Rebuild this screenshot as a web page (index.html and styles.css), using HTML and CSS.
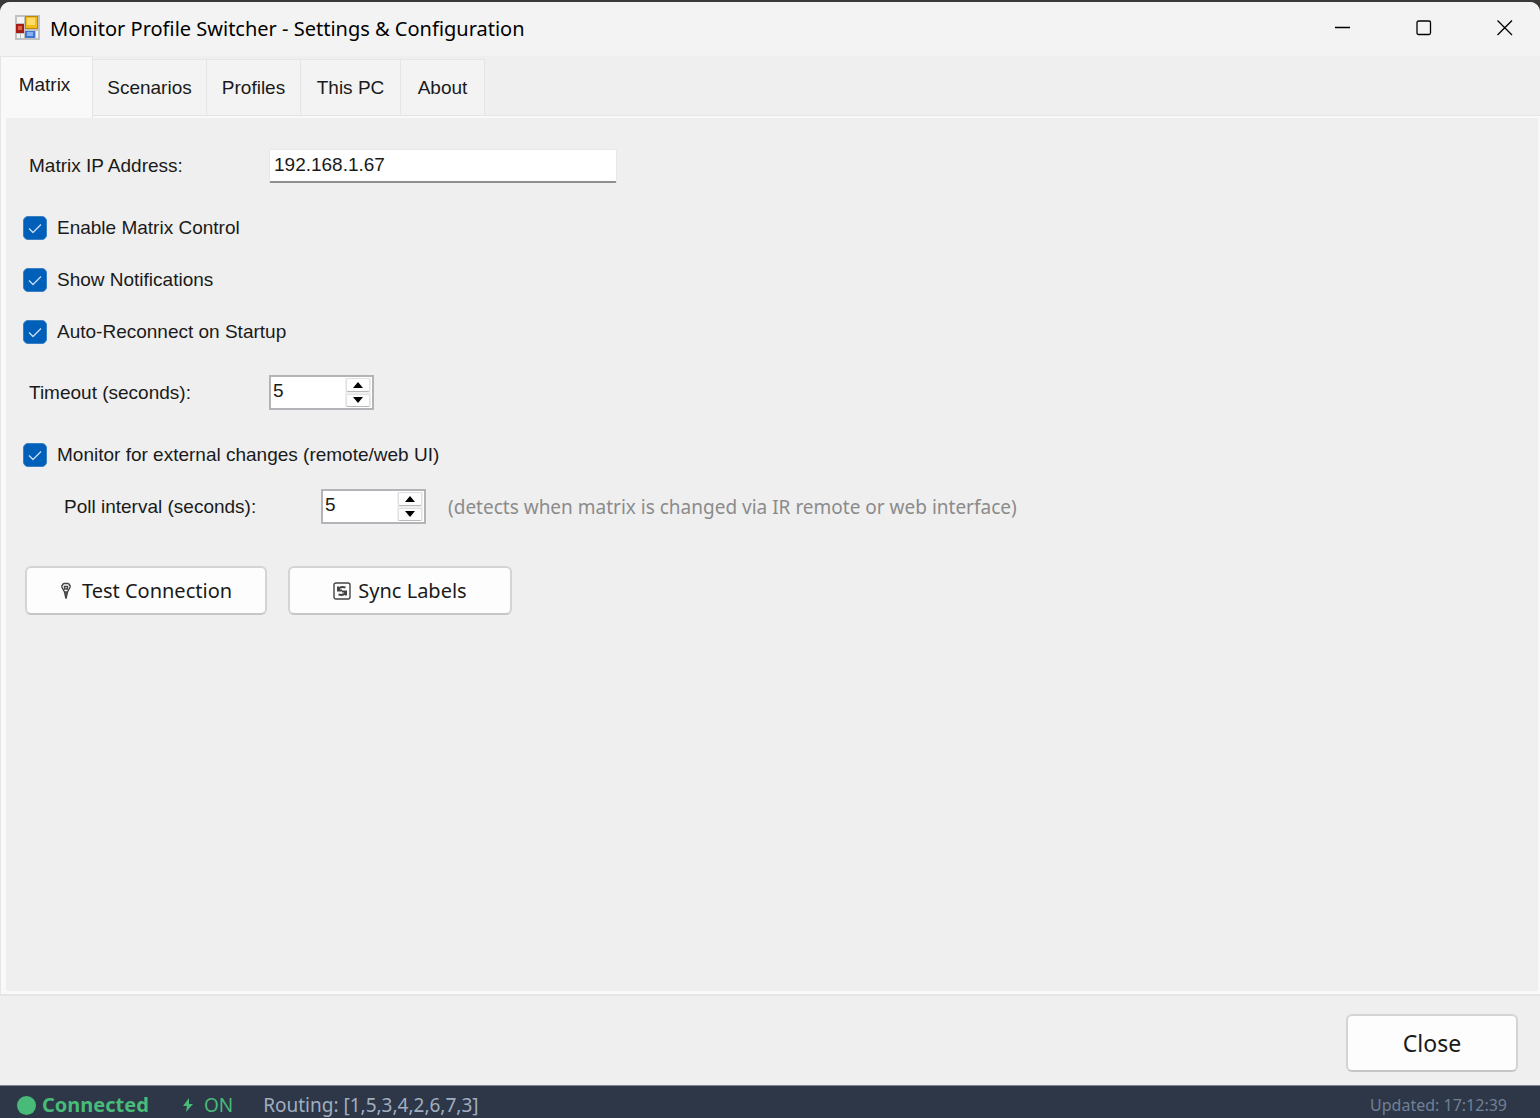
FILE: index.html
```html
<!DOCTYPE html>
<html lang="en">
<head>
    <meta charset="UTF-8">
    <title>Monitor Profile Switcher - Settings &amp; Configuration</title>
    <link rel="stylesheet" href="styles.css">
</head>
<body>
    <div class="window">
        <header class="titlebar">
            <svg class="app-icon" viewBox="0 0 25 25">
                <rect width="25" height="25" fill="#bfc1c3"/>
                <rect x="2" y="2" width="7" height="6" fill="#f4f4f4"/>
                <rect x="2" y="19" width="3" height="4" fill="#f4f4f4"/>
                <rect x="6" y="19" width="3" height="4" fill="#f4f4f4"/>
                <rect x="21" y="16" width="2" height="7" fill="#f4f4f4"/>
                <rect x="1" y="9" width="8" height="9" fill="#a51c14"/>
                <rect x="3" y="11" width="4" height="4" fill="#e2614d"/>
                <rect x="10" y="1" width="13" height="13" fill="#b98a0c"/>
                <rect x="11" y="2" width="11" height="11" fill="#f5bd1c"/>
                <rect x="12" y="3" width="8" height="7" fill="#fbdc6c"/>
                <rect x="10" y="16" width="10" height="7" fill="#3f74cf"/>
                <rect x="12" y="17" width="6" height="4" fill="#85b2f5"/>
            </svg>
            <h1>Monitor Profile Switcher - Settings &amp; Configuration</h1>
            <div class="window-controls">
                <button type="button" aria-label="Minimize">
                    <svg viewBox="0 0 16 16"><path d="M0 7.500h15"/></svg>
                </button>
                <button type="button" aria-label="Maximize">
                    <svg viewBox="0 0 16 16"><rect x="1" y="1" width="13.500" height="13.500" rx="1.500"/></svg>
                </button>
                <button type="button" aria-label="Close window">
                    <svg viewBox="0 0 16 16"><path d="M0.500 0.500l14.500 14.500M15 0.500l-14.500 14.500"/></svg>
                </button>
            </div>
        </header>

        <nav class="tabs" role="tablist">
            <button type="button" role="tab" class="tab active" aria-selected="true">Matrix</button>
            <button type="button" role="tab" class="tab">Scenarios</button>
            <button type="button" role="tab" class="tab">Profiles</button>
            <button type="button" role="tab" class="tab">This PC</button>
            <button type="button" role="tab" class="tab">About</button>
        </nav>

        <main class="panel">
            <form class="settings">
                <div class="field">
                    <label for="matrixIp">Matrix IP Address:</label>
                    <input type="text" class="text-input" id="matrixIp" value="192.168.1.67">
                </div>
                <label class="check">
                    <input type="checkbox" checked>
                    <svg viewBox="0 0 24 24"><path d="M6 12.500l4 4 8-8"/></svg>
                    Enable Matrix Control
                </label>
                <label class="check">
                    <input type="checkbox" checked>
                    <svg viewBox="0 0 24 24"><path d="M6 12.500l4 4 8-8"/></svg>
                    Show Notifications
                </label>
                <label class="check">
                    <input type="checkbox" checked>
                    <svg viewBox="0 0 24 24"><path d="M6 12.500l4 4 8-8"/></svg>
                    Auto-Reconnect on Startup
                </label>
                <div class="field">
                    <label for="timeout">Timeout (seconds):</label>
                    <div class="spinner">
                        <input type="number" id="timeout" value="5">
                        <div class="spin-buttons">
                            <button type="button" aria-label="Increase"><svg viewBox="0 0 12 7"><path d="M6 0l6 7H0z"/></svg></button>
                            <button type="button" aria-label="Decrease"><svg viewBox="0 0 12 7"><path d="M0 0h12L6 7z"/></svg></button>
                        </div>
                    </div>
                </div>
                <label class="check">
                    <input type="checkbox" checked>
                    <svg viewBox="0 0 24 24"><path d="M6 12.500l4 4 8-8"/></svg>
                    Monitor for external changes (remote/web UI)
                </label>
                <div class="field nested">
                    <label for="pollInterval">Poll interval (seconds):</label>
                    <div class="spinner">
                        <input type="number" id="pollInterval" value="5">
                        <div class="spin-buttons">
                            <button type="button" aria-label="Increase"><svg viewBox="0 0 12 7"><path d="M6 0l6 7H0z"/></svg></button>
                            <button type="button" aria-label="Decrease"><svg viewBox="0 0 12 7"><path d="M0 0h12L6 7z"/></svg></button>
                        </div>
                    </div>
                    <span class="hint">(detects when matrix is changed via IR remote or web interface)</span>
                </div>
                <div class="actions">
                    <button type="button" class="btn btn-test">
                        <svg class="icon-plug" viewBox="0 0 12 18">
                            <path d="M3.500 1.500h5M1.500 4.500l2-3M10.500 4.500l-2-3M1.500 4.500l3 5.500L6 16.500 7.500 10l3-5.500"/>
                            <path d="M4.500 4.500h3v2.500h-3zM4.500 10h3M6 10v6"/>
                        </svg>
                        Test Connection
                    </button>
                    <button type="button" class="btn btn-sync">
                        <svg class="icon-sync" viewBox="0 0 18 18">
                            <rect x="1" y="1" width="16" height="16" rx="2"/>
                            <path class="arrows" d="M5 4.500v4h4M5 8q2-4 7.500-2.500M13 13.500v-4H9M13 10q-2 4-7.500 2.500"/>
                        </svg>
                        Sync Labels
                    </button>
                </div>
            </form>
        </main>

        <div class="footer">
            <button type="button" class="btn btn-close">Close</button>
        </div>

        <footer class="statusbar">
            <span class="connected"><span class="dot"></span>Connected</span>
            <span class="power">
                <svg viewBox="0 0 10 14"><path d="M6 0L0 8h4l-1 6 7-8H6z"/></svg>
                ON
            </span>
            <span class="routing">Routing: [1,5,3,4,2,6,7,3]</span>
            <span class="updated">Updated: 17:12:39</span>
        </footer>
    </div>
</body>
</html>
```

FILE: styles.css
```css
* {
    box-sizing: border-box;
}
body {
    margin: 0;
    padding-top: 2px;
    background: #3b3838;
    font-family: "Liberation Sans", Arial, sans-serif;
    font-size: 19px;
    line-height: 24px;
    color: #1a1a1a;
}
button, input {
    font: inherit;
    color: inherit;
    margin: 0;
}
.window {
    display: flex;
    flex-direction: column;
    height: calc(100vh - 2px);
    background: #efefef;
    border-radius: 10px 10px 0 0;
    overflow: hidden;
}

/* title bar */
.titlebar {
    display: flex;
    align-items: center;
    flex: none;
    height: 54px;
    padding-left: 15px;
    background: #f3f3f3;
}
.app-icon {
    width: 25px;
    height: 25px;
    margin: 0 10px 4px 0;
}
.titlebar h1 {
    margin: 0;
    font-family: "Noto Sans", sans-serif;
    font-size: 20px;
    font-weight: 400;
    color: #000;
}
.window-controls {
    display: flex;
    align-self: stretch;
    gap: 11px;
    margin-left: auto;
}
.window-controls button {
    display: flex;
    align-items: center;
    justify-content: center;
    width: 70px;
    padding: 0 0 2px;
    border: none;
    background: none;
}
.window-controls svg {
    width: 16px;
    height: 16px;
    fill: none;
    stroke: #000;
    stroke-width: 1.3;
}

/* tabs */
.tabs {
    display: flex;
    align-items: flex-end;
    flex: none;
    height: 59px;
}
.tab {
    height: 56px;
    padding: 0;
    border: 1px solid #e5e5e5;
    border-width: 1px 1px 0 0;
    background: #f3f3f3;
}
.tab.active {
    position: relative;
    z-index: 1;
    width: 93px;
    height: 62px;
    margin-bottom: -3px;
    padding: 0 4px 5px 0;
    border-left-width: 1px;
    background: #f9f9f9;
}
.tab:nth-child(2) {
    width: 114px;
}
.tab:nth-child(3) {
    width: 94px;
}
.tab:nth-child(4) {
    width: 100px;
}
.tab:nth-child(5) {
    width: 84px;
}

/* settings page */
.panel {
    flex: 1;
    border: 1px solid #e5e5e5;
    border-width: 1px 0 2px 1px;
    box-shadow: inset 5px 0 #f9f9f9, inset 0 2px #f9f9f9, inset -2px 0 #f9f9f9, inset 0 -3px #f9f9f9;
    padding: 32px 22px;
}
.settings {
    display: flex;
    flex-direction: column;
    align-items: flex-start;
}
.field {
    display: flex;
    align-items: center;
    height: 35px;
    padding-left: 6px;
}
.field label {
    width: 240px;
}
.field.nested {
    margin-top: 22px;
    padding-left: 41px;
}
.field.nested label {
    width: 257px;
}
.text-input {
    width: 348px;
    height: 34px;
    padding: 0 4px;
    border: 1px solid #e8e8e8;
    border-bottom: 2px solid #8e8e8e;
    border-radius: 2px;
    background: #fff;
}
.check {
    display: grid;
    grid-template-columns: 24px auto;
    align-items: center;
    column-gap: 10px;
    height: 24px;
    margin-top: 28px;
}
.field + .check {
    margin-top: 33px;
}
.check + .field:not(.nested) {
    margin-top: 31px;
}
.check input {
    grid-area: 1 / 1;
    appearance: none;
    width: 24px;
    height: 24px;
    border: 1px solid #868686;
    border-radius: 5px;
    background: #fff;
}
.check input:checked {
    border-color: #3b7fc6;
    background: #005fb8;
}
.check svg {
    grid-area: 1 / 1;
    width: 24px;
    height: 24px;
    fill: none;
    stroke: #c4daef;
    stroke-width: 1.4;
    pointer-events: none;
}
.spinner {
    display: flex;
    width: 105px;
    height: 35px;
    padding: 1px;
    border: 2px solid #b4b4b8;
    background: #fff;
}
.spinner input {
    flex: 1;
    min-width: 0;
    padding: 0 1px 3px;
    border: none;
    background: none;
    appearance: textfield;
}
.spinner input::-webkit-inner-spin-button {
    appearance: none;
}
.spin-buttons {
    display: flex;
    flex-direction: column;
    gap: 2px;
    width: 26px;
    padding: 0 1px;
    background: #efefef;
}
.spin-buttons button {
    display: flex;
    align-items: center;
    justify-content: center;
    flex: 1;
    padding: 0;
    border: 1px solid #e0e0e0;
    border-bottom-color: #b8b8b8;
    border-radius: 2px;
    background: #fdfdfd;
}
.spin-buttons svg {
    width: 10px;
    height: 6px;
}
.hint {
    margin-left: 22px;
    font-family: "Noto Sans", sans-serif;
    font-size: 19px;
    color: #8b8b8b;
}

/* buttons */
.actions {
    display: flex;
    gap: 21px;
    margin-top: 42px;
    padding-left: 2px;
}
.btn {
    display: flex;
    align-items: center;
    justify-content: center;
    height: 49px;
    padding: 0;
    border: 2px solid #d4d4d4;
    border-bottom-color: #c6c6c6;
    border-radius: 6px;
    background: #fdfdfd;
    font-family: "Noto Sans", sans-serif;
    font-size: 20px;
}
.btn-test {
    gap: 10px;
    width: 242px;
}
.btn-sync {
    gap: 7px;
    width: 224px;
}
.btn svg {
    fill: none;
    stroke: #444;
    stroke-width: 1.4;
}
.icon-plug {
    width: 12px;
    height: 18px;
}
.icon-sync {
    width: 18px;
    height: 18px;
}
.btn .arrows {
    stroke-width: 2;
}
.footer {
    display: flex;
    justify-content: flex-end;
    flex: none;
    height: 89px;
    padding: 18px 22px 0;
}
.btn-close {
    width: 172px;
    height: 58px;
    font-size: 23px;
}

/* status bar */
.statusbar {
    display: flex;
    align-items: center;
    flex: none;
    height: 33px;
    padding: 6px 33px 0 17px;
    border-top: 1px solid #7d8593;
    background: #2d3748;
    font-family: "Noto Sans", sans-serif;
    font-size: 19px;
    color: #a0aec0;
}
.connected {
    display: flex;
    align-items: center;
    gap: 6px;
    font-size: 20px;
    font-weight: 700;
    color: #48bb78;
}
.dot {
    width: 19px;
    height: 19px;
    border-radius: 50%;
    background: #48bb78;
}
.power {
    display: flex;
    align-items: center;
    gap: 11px;
    margin-left: 34px;
    color: #48bb78;
}
.power svg {
    width: 10px;
    height: 14px;
    fill: #48bb78;
}
.routing {
    margin-left: 30px;
}
.updated {
    margin-left: auto;
    font-size: 16px;
    color: #718096;
}
```
